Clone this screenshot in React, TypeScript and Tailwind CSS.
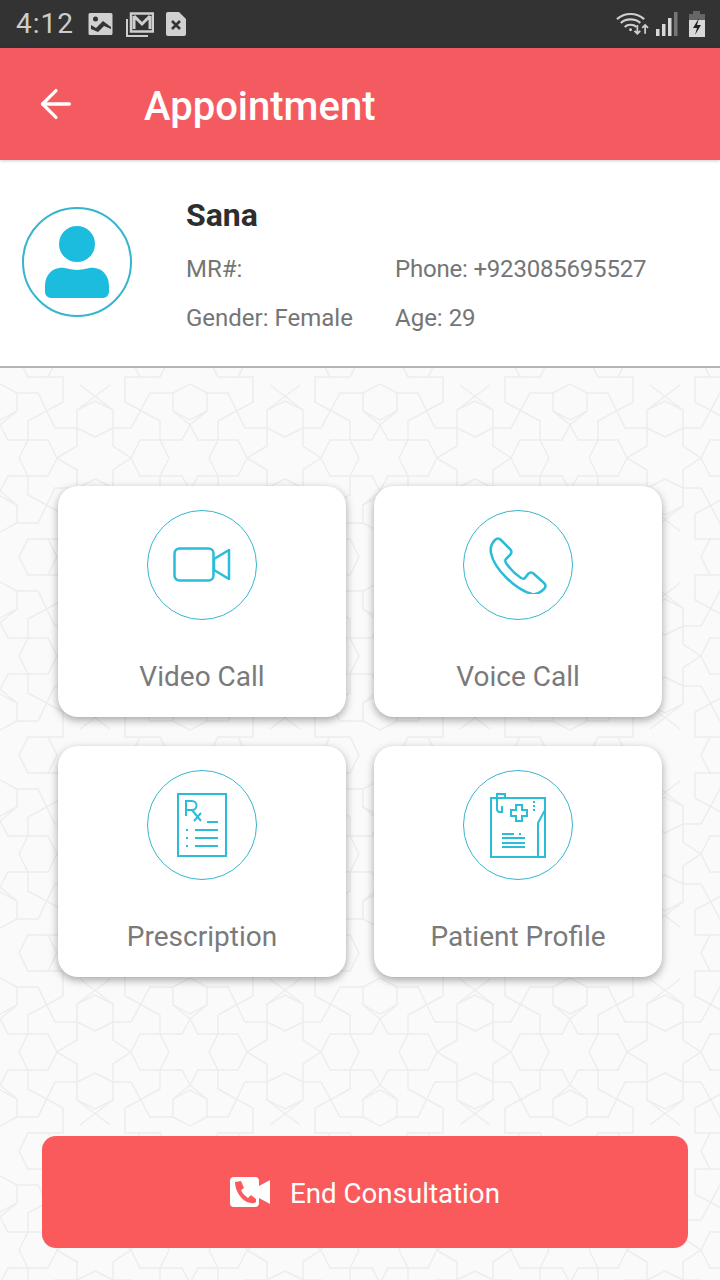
import React from 'react';
import { ArrowLeft } from 'lucide-react';

const font = { fontFamily: 'Roboto, sans-serif' };

function StatusIcons() {
  return (
    <div className="flex items-center gap-[12px]">
      <svg width="26" height="24" viewBox="0 0 26 24">
        <path fill="#d0d0d0" d="M2 1h21a1.500 1.500 0 0 1 1.500 1.500v19A1.500 1.500 0 0 1 23 23H2a1.500 1.500 0 0 1-1.500-1.500v-19A1.500 1.500 0 0 1 2 1z" />
        <circle cx="7.500" cy="7" r="2.500" fill="#333" />
        <path fill="#333" d="M3 13l5 3 7-7 8 6v2l-7-3-6 6-7-3z" />
      </svg>
      <svg width="28" height="25" viewBox="0 0 28 25" fill="none" stroke="#cfcfcf">
        <path strokeWidth="2" d="M1 7v17h21" />
        <rect x="5" y="1.500" width="22" height="18" strokeWidth="2.500" />
        <path strokeWidth="3" d="M8 4v13M24 4v13M8 4l8 8 8-8" />
      </svg>
      <svg width="20" height="24" viewBox="0 0 20 24">
        <path fill="#d0d0d0" d="M2 0h11l7 7v15a2 2 0 0 1-2 2H2a2 2 0 0 1-2-2V2a2 2 0 0 1 2-2z" />
        <path stroke="#333" strokeWidth="2.500" d="M6 9l8 8M14 9l-8 8" />
      </svg>
    </div>
  );
}

function SystemIcons() {
  return (
    <div className="flex items-center gap-[7px]">
      <svg width="33" height="24" viewBox="0 0 34 24" fill="none" stroke="#cfcfcf" strokeWidth="2.200">
        <path d="M1 7c8-7 20-7 28 0" />
        <path d="M5 11c5-5 15-5 20 0" />
        <path d="M9 15c3-3 9-3 12 0" />
        <circle cx="15" cy="18" r="1.500" fill="#cfcfcf" stroke="none" />
        <path strokeWidth="1.800" d="M22 13v9m-3-3l3 3 3-3M30 22v-9m-3 3l3-3 3 3" />
      </svg>
      <svg width="22" height="26" viewBox="0 0 22 26">
        <rect x="0" y="18" width="3.500" height="7" fill="#d8d8d8" />
        <rect x="6" y="13" width="3.500" height="12" fill="#d8d8d8" />
        <rect x="12" y="7" width="3.500" height="18" fill="#d8d8d8" />
        <rect x="18" y="1" width="3.500" height="24" fill="#777" />
      </svg>
      <svg width="18" height="26" viewBox="0 0 18 26" className="ml-[3px]">
        <path fill="#666" d="M5 0h7v3h5v7H1V3h4z" />
        <rect x="1" y="9" width="16" height="17" fill="#d8d8d8" />
        <path fill="#222" d="M11 7l-6 10h4l-2 7 6-10H9z" />
      </svg>
    </div>
  );
}

function StatusBar() {
  return (
    <div className="h-[48px] bg-[#333333] flex items-center justify-between pl-[16px] pr-[14px]">
      <div className="flex items-center gap-[14px]">
        <span className="text-[28px] text-[#cdcdcd] tracking-[1px]">4:12</span>
        <StatusIcons />
      </div>
      <SystemIcons />
    </div>
  );
}

function Profile() {
  return (
    <div className="h-[206px] bg-white flex items-center pl-[22px]">
      <div className="w-[110px] h-[110px] mb-[2px] rounded-full border-2 border-[#36b5cf] flex items-center justify-center">
        <svg width="64" height="72" viewBox="0 0 64 72" fill="#1cbcdf">
          <circle cx="32" cy="18" r="18" />
          <path d="M14 42c6-1 10 2 18 2s12-3 18-2c8 1 14 8 14 18v6a6 6 0 0 1-6 6H6a6 6 0 0 1-6-6v-6c0-10 6-17 14-18z" />
        </svg>
      </div>
      <div className="ml-[54px] mt-[3px] flex flex-col">
        <div className="text-[32px] leading-[36px] font-bold text-[#2e2e2e]">Sana</div>
        <div className="grid grid-cols-[209px_1fr] text-[24px] leading-[28px] text-[#757575] mt-[22px] gap-y-[21px]">
          <span>MR#:</span>
          <span className="tracking-[-0.2px]">Phone: +923085695527</span>
          <span>Gender: Female</span>
          <span>Age: 29</span>
        </div>
      </div>
    </div>
  );
}

function VideoIcon() {
  return (
    <svg width="58" height="36" viewBox="0 0 58 36" fill="none" stroke="#2bbcd8" strokeWidth="2.500" strokeLinejoin="round">
      <rect x="1.500" y="1.500" width="39" height="32" rx="5" />
      <path d="M41 12l15-9v29l-15-9z" />
    </svg>
  );
}

function PhoneIcon() {
  return (
    <svg width="58" height="58" viewBox="0 0 58 58" fill="none" stroke="#2bbcd8" strokeWidth="2.500" strokeLinejoin="round">
      <path d="M6 4c2-2 4-2 6 0l9 9c2 2 2 4 0 6l-4 4c-1 1-1 2 0 4 4 6 9 11 15 15 2 1 3 1 4 0l3-4c2-2 4-2 6 0l10 9c2 2 2 4 0 6-4 4-7 6-12 5C27 54 5 33 2 17 1 12 2 8 6 4z" />
    </svg>
  );
}

function RxIcon() {
  return (
    <svg width="50" height="64" viewBox="0 0 50 64" fill="none" stroke="#2bbcd8" strokeWidth="2">
      <rect x="1" y="1" width="48" height="62" />
      <path d="M9 23V8h6a4.500 4.500 0 0 1 0 9H9M15 17l9 11M24 20l-7 8" strokeWidth="2" />
      <path d="M30 29h11M18 37h23M18 45h23M18 53h23" />
      <path d="M9 37h2M9 45h2M9 53h2" />
    </svg>
  );
}

function ProfileIcon() {
  return (
    <svg width="56" height="65" viewBox="0 0 56 65" fill="none" stroke="#2bbcd8" strokeWidth="2">
      <rect x="1" y="5" width="54" height="59" />
      <path d="M55 17l-7 13v34" />
      <path d="M7 5V1h8v4M7 5v11c0 2 1 3 3 3h2v-6" />
      <path d="M21 17h5v-5h6v5h5v6h-5v5h-6v-5h-5z" />
      <path d="M12 41h12M29 41h2M12 45h23M12 50h23M12 54h23" />
      <path d="M44 8v2M44 12v2M44 16v2" />
    </svg>
  );
}

function ActionCard({ label, icon }: { label: string; icon: React.ReactNode }) {
  return (
    <div className="h-[231px] bg-white rounded-[20px] shadow-[0_3px_8px_rgba(0,0,0,0.35)] flex flex-col items-center pt-[24px]">
      <div className="w-[110px] h-[110px] rounded-full border border-[#36b5cf] flex items-center justify-center">
        {icon}
      </div>
      <div className="mt-[39px] text-[28px] leading-[36px] text-[#7a7a7a]">{label}</div>
    </div>
  );
}

// one half of the background tile, the other half is this one flipped
function TileHalf() {
  return (
    <>
      <path d="M19 0L28 18H48L57 0M131 0L140 18H160L169 0" />
      <path d="M19 99L28 81H48L57 99M131 99L140 81H160L169 99" />
      <path d="M95 21L113 30V48L95 57L77 48V30Z" />
      <path d="M190 38L207 47V65L190 74L173 65V47Z" />
      <path d="M0 38L17 47V65L0 74L-17 65V47Z" />
      <path d="M28 18V37L63 56V81H48M160 18V37L125 56V81H140" />
      <path d="M57 0L77 12V30M131 0L113 12V30" />
      <path d="M77 30H55L38 65H15M113 30H131L150 65H173" />
      <path d="M160 18H182L190 33L173 47M190 33L207 47M28 18H8L0 33L17 47" />
      <path d="M77 48L110 73M113 48L80 73" />
    </>
  );
}

export default function App() {
  return (
    <div className="w-[720px] h-[1280px] flex flex-col overflow-hidden" style={font}>
      <StatusBar />
      <div className="h-[112px] bg-[#f45b60] flex items-center pl-[33px] relative z-10 shadow-[0_1px_3px_rgba(0,0,0,0.2)]">
        <ArrowLeft size={46} color="#ffffff" strokeWidth={1.7} />
        <h1 className="ml-[65px] mt-[5px] text-[40px] font-medium text-white">Appointment</h1>
      </div>
      <Profile />
      <main className="relative flex-1 bg-[#fafafa] border-t-2 border-[#b5b5b5] flex flex-col">
        <svg className="absolute inset-0 w-full h-full" aria-hidden="true">
          <defs>
            <pattern id="tile" x="0" y="90" width="190" height="198" patternUnits="userSpaceOnUse">
              <g fill="none" stroke="#ededed" strokeWidth="1.500">
                <TileHalf />
                <g transform="translate(0 198) scale(1 -1)">
                  <TileHalf />
                </g>
              </g>
            </pattern>
          </defs>
          <rect width="100%" height="100%" fill="url(#tile)" />
        </svg>
        <div className="relative grid grid-cols-2 gap-x-[28px] gap-y-[29px] mt-[118px] mx-[58px]">
          <ActionCard label="Video Call" icon={<VideoIcon />} />
          <ActionCard label="Voice Call" icon={<PhoneIcon />} />
          <ActionCard label="Prescription" icon={<RxIcon />} />
          <ActionCard label="Patient Profile" icon={<ProfileIcon />} />
        </div>
        <button className="relative mt-[159px] ml-[42px] mr-[32px] h-[112px] rounded-[14px] bg-[#fb5a5c] flex items-center justify-center gap-[20px] text-[27.700px] text-white">
          <svg width="40" height="30" viewBox="0 0 40 30">
            <rect x="0" y="0" width="29" height="30" rx="4" fill="#ffffff" />
            <path d="M29 9l11-6v24l-11-6z" fill="#ffffff" />
            <path fill="#fb5a5c" d="M5 5l6-1 3 7-3 2c1 3 4 6 7 8l3-3 5 4v3c-3 2-6 1-9 0C11 22 5 14 5 5z" />
          </svg>
          <span className="mt-[3px]">End Consultation</span>
        </button>
      </main>
    </div>
  );
}
